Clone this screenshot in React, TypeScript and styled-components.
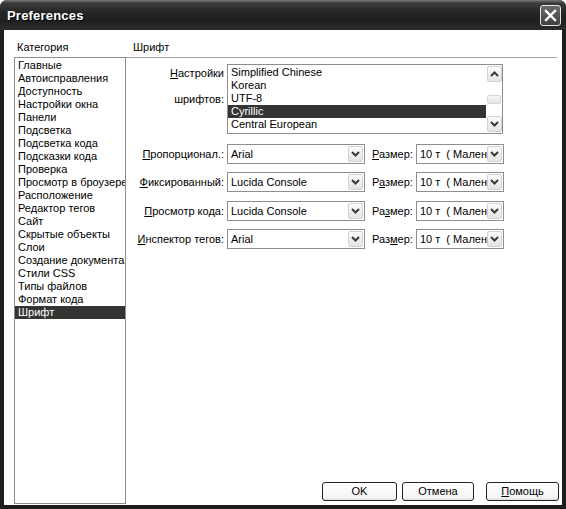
import styled, { createGlobalStyle } from "styled-components";

const GlobalStyle = createGlobalStyle`
	html, body {
		margin: 0;
		padding: 0;
		background: #ffffff;
	}
	body {
		font-family: "Liberation Sans", Arial, sans-serif;
		font-size: 11px;
		color: #000000;
		overflow: hidden;
	}
	* {
		box-sizing: border-box;
	}
`;

const Window = styled.div`
	width: 566px;
	height: 509px;
	display: flex;
	flex-direction: column;
	background: #1e1e1e;
	border-radius: 7px 7px 0 0;
	overflow: hidden;
`;

const TitleBar = styled.div`
	height: 30px;
	flex: none;
	display: flex;
	align-items: center;
	justify-content: space-between;
	padding: 0 5px 0 7px;
	background: linear-gradient(
		180deg,
		#7a7a7a 0px,
		#3c3c3c 3px,
		#262626 40%,
		#1f1f1f 70%,
		#2c2c2c 100%
	);
`;

const Title = styled.span`
	font-family: "Liberation Sans", Arial, sans-serif;
	font-weight: bold;
	font-size: 13px;
	color: #ffffff;
	text-shadow: 1px 1px 0 #000000;
	letter-spacing: 0.2px;
`;

const CloseButton = styled.div`
	width: 21px;
	height: 21px;
	border: 1px solid #e6e6e6;
	border-radius: 3px;
	background: linear-gradient(180deg, #6a6a6a 0%, #3e3e3e 100%);
	display: flex;
	align-items: center;
	justify-content: center;
`;

const Body = styled.div`
	flex: 1;
	display: flex;
	margin: 0 4px 4px;
	padding-left: 10px;
	background: #ffffff;
	min-height: 0;
`;

const LeftColumn = styled.div`
	width: 112px;
	display: flex;
	flex-direction: column;
	padding-bottom: 1px;
`;

const RightColumn = styled.div`
	flex: 1;
	display: flex;
	flex-direction: column;
`;

const Header = styled.div<{ $indent: number }>`
	height: 27px;
	padding-top: 10px;
	padding-left: ${(p) => p.$indent}px;
	line-height: 14px;
	flex: none;
`;

const CategoryList = styled.div`
	flex: 1;
	border: 1px solid #8e8e8e;
	padding-top: 1px;
	overflow: hidden;
`;

const ListItem = styled.div<{ $selected?: boolean }>`
	height: 13px;
	line-height: 13px;
	padding-left: 3px;
	white-space: nowrap;
	overflow: hidden;
	background: ${(p) => (p.$selected ? "#343434" : "transparent")};
	color: ${(p) => (p.$selected ? "#ffffff" : "#000000")};
`;

const Panel = styled.div`
	flex: 1;
	margin-right: 5px;
	border-top: 1px solid #a4a4a4;
	padding-top: 6px;
`;

const FieldRow = styled.div<{ $top: number; $tall?: boolean }>`
	display: flex;
	align-items: center;
	margin-top: ${(p) => p.$top}px;
	height: ${(p) => (p.$tall ? 70 : 20)}px;
`;

const FieldLabel = styled.div<{ $multi?: boolean }>`
	width: 98px;
	margin-right: 3px;
	text-align: right;
	white-space: nowrap;
	align-self: ${(p) => (p.$multi ? "flex-start" : "center")};
	line-height: ${(p) => (p.$multi ? "26px" : "13px")};
	margin-top: ${(p) => (p.$multi ? "-4px" : "0")};
`;

const ListBox = styled.div`
	width: 276px;
	height: 70px;
	border: 1px solid #8e8e8e;
	display: flex;
	align-self: flex-start;
`;

const ListBoxItems = styled.div`
	flex: 1;
	padding-top: 1px;
	overflow: hidden;
`;

const ScrollBar = styled.div`
	width: 16px;
	display: flex;
	flex-direction: column;
	justify-content: space-between;
	align-items: center;
	padding: 1px 0;
`;

const ScrollButton = styled.div`
	width: 15px;
	height: 16px;
	border: 1px solid #d2d2d2;
	border-radius: 2px;
	background: linear-gradient(180deg, #fbfbfb 0%, #e4e4e4 100%);
	display: flex;
	align-items: center;
	justify-content: center;
`;

const ScrollThumb = styled.div`
	width: 14px;
	height: 9px;
	border: 1px solid #d6d6d6;
	border-radius: 2px;
	background: linear-gradient(180deg, #f6f6f6 0%, #e6e6e6 100%);
`;

const Select = styled.div<{ $width: number }>`
	width: ${(p) => p.$width}px;
	height: 20px;
	border: 1px solid #8e8e8e;
	background: #ffffff;
	display: flex;
	align-items: center;
	padding: 1px;
`;

const SelectValue = styled.div`
	flex: 1;
	padding-left: 2px;
	white-space: pre;
	overflow: hidden;
	line-height: 16px;
`;

const DropButton = styled(ScrollButton)`
	height: 16px;
	flex: none;
`;

const SizeLabel = styled.div`
	margin: 0 3px 0 7px;
	white-space: nowrap;
`;

const ButtonRow = styled.div`
	display: flex;
	justify-content: flex-end;
	padding: 0 3px 4px 0;
	flex: none;
`;

const DialogButton = styled.div<{ $width: number; $gap: number }>`
	width: ${(p) => p.$width}px;
	height: 19px;
	margin-left: ${(p) => p.$gap}px;
	border: 1px solid #222222;
	border-radius: 3px;
	background: linear-gradient(180deg, #ffffff 0%, #f4f4f4 85%, #dedede 100%);
	display: flex;
	align-items: center;
	justify-content: center;
	line-height: 13px;
`;

const Chevron = ({ up }: { up?: boolean }) => (
	<svg width="9" height="6" viewBox="0 0 9 6">
		<path
			d={up ? "M1 5 L4.5 1.5 L8 5" : "M1 1 L4.5 4.5 L8 1"}
			fill="none"
			stroke="#3a3a3a"
			strokeWidth="2"
		/>
	</svg>
);

const categories = [
	"Главные",
	"Автоисправления",
	"Доступность",
	"Настройки окна",
	"Панели",
	"Подсветка",
	"Подсветка кода",
	"Подсказки кода",
	"Проверка",
	"Просмотр в броузере",
	"Расположение",
	"Редактор тегов",
	"Сайт",
	"Скрытые объекты",
	"Слои",
	"Создание документа",
	"Стили CSS",
	"Типы файлов",
	"Формат кода",
	"Шрифт",
];

const encodings = [
	"Simplified Chinese",
	"Korean",
	"UTF-8",
	"Cyrillic",
	"Central European",
];

const fontRows = [
	{ key: "p", top: 10, label: ["П", "ропорционал.:"], font: "Arial", size: ["", "Р", "азмер:"] },
	{ key: "f", top: 8, label: ["Ф", "иксированный:"], font: "Lucida Console", size: ["Р", "а", "змер:"] },
	{ key: "c", top: 9, label: ["П", "росмотр кода:"], font: "Lucida Console", size: ["Ра", "з", "мер:"] },
	{ key: "i", top: 8, label: ["И", "нспектор тегов:"], font: "Arial", size: ["Раз", "м", "ер:"] },
];

const App = (): JSX.Element => {
	return (
		<>
			<GlobalStyle />
			<Window>
				<TitleBar>
					<Title>Preferences</Title>
					<CloseButton>
						<svg width="13" height="13" viewBox="0 0 13 13">
							<path
								d="M2 2 L11 11 M11 2 L2 11"
								stroke="#ffffff"
								strokeWidth="2.4"
								strokeLinecap="square"
							/>
						</svg>
					</CloseButton>
				</TitleBar>
				<Body>
					<LeftColumn>
						<Header $indent={3}>Категория</Header>
						<CategoryList>
							{categories.map((name) => (
								<ListItem key={name} $selected={name === "Шрифт"}>
									{name}
								</ListItem>
							))}
						</CategoryList>
					</LeftColumn>
					<RightColumn>
						<Header $indent={7}>Шрифт</Header>
						<Panel>
							<FieldRow $top={0} $tall>
								<FieldLabel $multi>
									<u>Н</u>астройки
									<br />
									шрифтов:
								</FieldLabel>
								<ListBox>
									<ListBoxItems>
										{encodings.map((enc) => (
											<ListItem key={enc} $selected={enc === "Cyrillic"}>
												{enc}
											</ListItem>
										))}
									</ListBoxItems>
									<ScrollBar>
										<ScrollButton>
											<Chevron up />
										</ScrollButton>
										<ScrollThumb />
										<ScrollButton>
											<Chevron />
										</ScrollButton>
									</ScrollBar>
								</ListBox>
							</FieldRow>
							{fontRows.map((row) => (
								<FieldRow key={row.key} $top={row.top}>
									<FieldLabel>
										<u>{row.label[0]}</u>
										{row.label[1]}
									</FieldLabel>
									<Select $width={138}>
										<SelectValue>{row.font}</SelectValue>
										<DropButton>
											<Chevron />
										</DropButton>
									</Select>
									<SizeLabel>
										{row.size[0]}
										<u>{row.size[1]}</u>
										{row.size[2]}
									</SizeLabel>
									<Select $width={88}>
										<SelectValue>10 т  ( Маленький)</SelectValue>
										<DropButton>
											<Chevron />
										</DropButton>
									</Select>
								</FieldRow>
							))}
						</Panel>
						<ButtonRow>
							<DialogButton $width={75} $gap={0}>
								OK
							</DialogButton>
							<DialogButton $width={72} $gap={5}>
								Отмена
							</DialogButton>
							<DialogButton $width={73} $gap={12}>
								<span>
									<u>П</u>омощь
								</span>
							</DialogButton>
						</ButtonRow>
					</RightColumn>
				</Body>
			</Window>
		</>
	);
};

export default App;
